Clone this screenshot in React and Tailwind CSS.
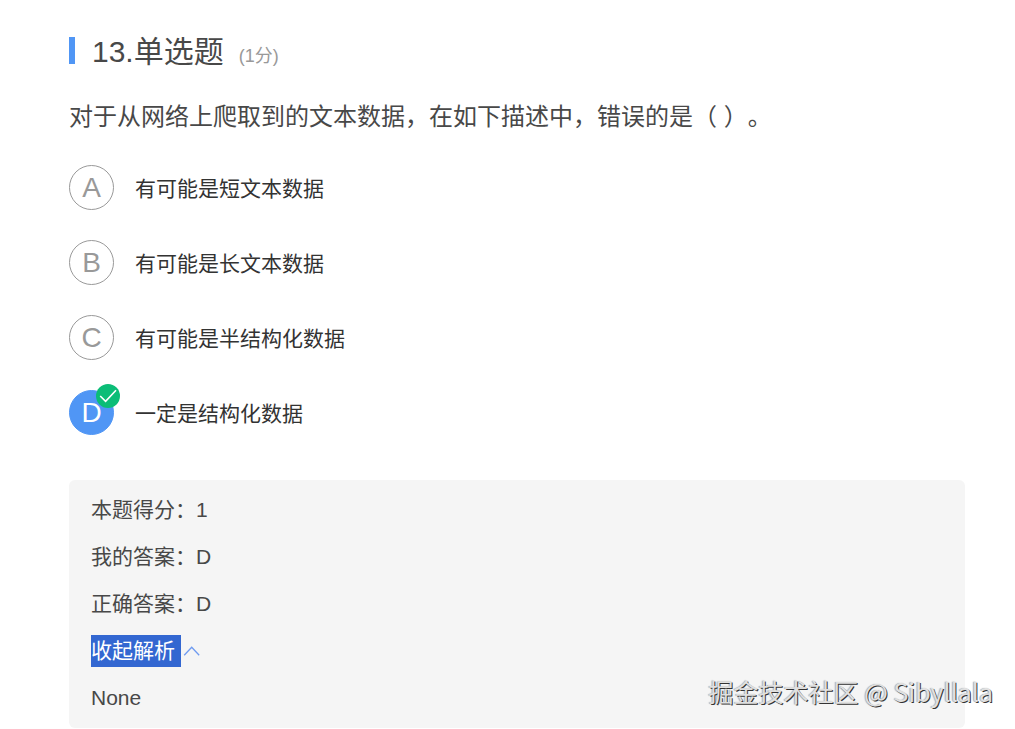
import { useState } from "react";

const options = [
  { key: "A", text: "有可能是短文本数据" },
  { key: "B", text: "有可能是长文本数据" },
  { key: "C", text: "有可能是半结构化数据" },
  { key: "D", text: "一定是结构化数据" },
];

const results = [
  { label: "本题得分：", value: "1" },
  { label: "我的答案：", value: "D" },
  { label: "正确答案：", value: "D" },
];

const correct = "D";

function CheckBadge() {
  return (
    <svg viewBox="0 0 24 24" className="absolute -top-1.5 left-[27px] size-6" aria-hidden="true">
      <circle cx="12" cy="12" r="12" fill="#0bbd77" />
      <path d="M4.2 12 L9.6 17.4 L20 6.2" fill="none" stroke="#fff" strokeWidth="1.6" />
    </svg>
  );
}

function Option({ option, selected, onSelect }) {
  return (
    <label className="flex cursor-pointer items-center gap-[21px]">
      <span className="relative grid shrink-0 place-items-center">
        <input
          type="radio"
          name="answer"
          value={option.key}
          checked={selected}
          onChange={() => onSelect(option.key)}
          className="peer col-start-1 row-start-1 size-[45px] cursor-pointer appearance-none rounded-full border border-[#999] checked:border-[#5096f5] checked:bg-[#5096f5]"
        />
        <span className="col-start-1 row-start-1 text-[28px] leading-8 text-[#999] peer-checked:text-white">
          {option.key}
        </span>
        {selected && option.key === correct && <CheckBadge />}
      </span>
      <span className="pt-0.5 text-[21px] leading-8 text-[#333]">{option.text}</span>
    </label>
  );
}

export default function App() {
  const [answer, setAnswer] = useState("D");
  const [open, setOpen] = useState(true);

  return (
    <main className="relative bg-white pt-8 pr-[50px] pl-[69px] font-['Liberation_Sans','Noto_Sans_CJK_SC',sans-serif] text-[#484848]">
      <header className="flex items-center">
        <span className="-mt-1 h-[27px] w-1.5 bg-[#5096f5]" />
        <h1 className="ml-[17px] text-[30px] leading-10">13.单选题</h1>
        <span className="ml-[15px] pt-2 text-lg leading-8 text-[#999]">(1分)</span>
      </header>

      <p className="mt-[25px] text-2xl leading-10 [text-spacing-trim:space-all]">
        对于从网络上爬取到的文本数据，在如下描述中，错误的是（ ）。
      </p>

      <fieldset aria-label="选项" className="mt-7 flex flex-col gap-[30px]">
        {options.map((option) => (
          <Option
            key={option.key}
            option={option}
            selected={answer === option.key}
            onSelect={setAnswer}
          />
        ))}
      </fieldset>

      <section className="mt-[45px] flex flex-col gap-[15px] rounded-md bg-[#f5f5f5] px-[22px] py-3.5 text-[21px] leading-8">
        {results.map((row) => (
          <p key={row.label}>
            {row.label}
            {row.value}
          </p>
        ))}
        <button
          type="button"
          aria-expanded={open}
          onClick={() => setOpen(!open)}
          className="flex cursor-pointer items-center gap-0.5 self-start"
        >
          <span className="bg-[#3367d1] pr-1.5 text-white">{open ? "收起解析" : "查看解析"}</span>
          <svg viewBox="0 0 18 12" className={open ? "h-3 w-[18px]" : "h-3 w-[18px] rotate-180"} aria-hidden="true">
            <path d="M1.2 10.2 L8.7 2.2 L16.2 10.2" fill="none" stroke="#6f9bf0" strokeWidth="1.3" />
          </svg>
        </button>
        {open && <p>None</p>}
      </section>

      <div className="pointer-events-none absolute right-[22px] bottom-[19px] font-['Noto_Sans_CJK_SC',sans-serif] text-[25px] leading-9 text-[#e0e0e0] [text-shadow:1px_1px_0_#333,-1px_0_1px_#aaa]">
        掘金技术社区 @ Sibyllala
      </div>
    </main>
  );
}
